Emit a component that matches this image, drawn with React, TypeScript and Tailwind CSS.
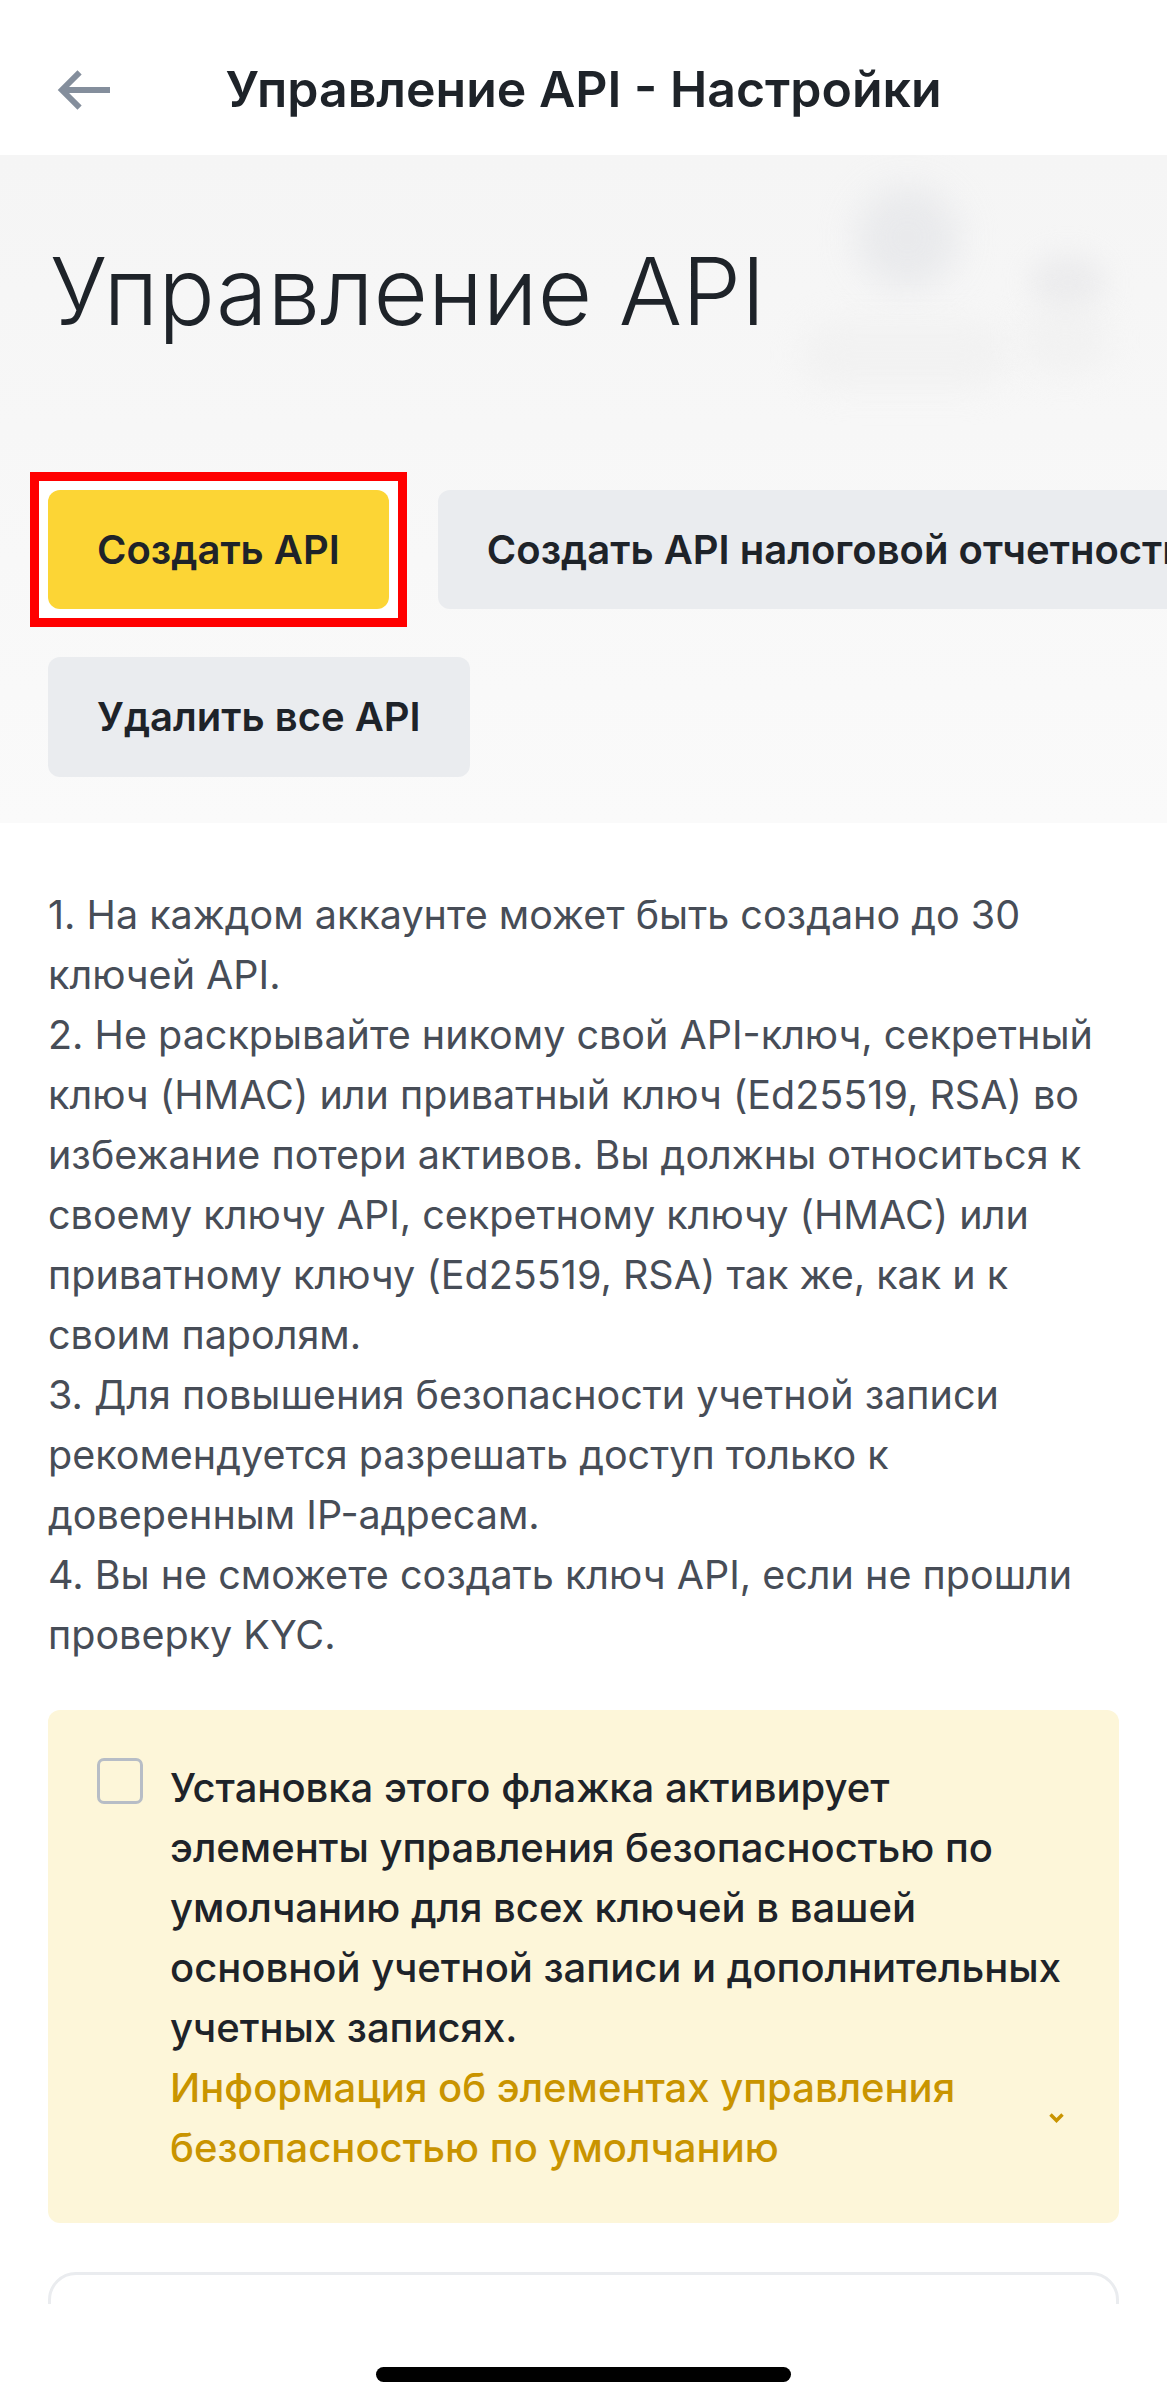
import React from "react";

function BackArrow() {
  return (
    <svg width="54" height="42" viewBox="0 0 54 42" fill="none">
      <path d="M23 3 L5 21 L23 39" stroke="#848E9C" strokeWidth="6" strokeLinejoin="miter" />
      <path d="M5 21 H54" stroke="#848E9C" strokeWidth="6" />
    </svg>
  );
}

function Chevron() {
  return (
    <svg width="15" height="10" viewBox="0 0 15 10" fill="none">
      <path d="M1.5 1.5 L7.5 7.5 L13.5 1.5" stroke="#C99400" strokeWidth="3.5" />
    </svg>
  );
}

export default function App() {
  return (
    <div className="w-[1167px] h-[2406px] bg-white overflow-hidden flex flex-col font-['Inter',sans-serif] text-[#1E2329]">
      <header className="h-[155px] shrink-0 flex items-center pt-[24px]">
        <div className="w-[110px] pl-[57px] flex items-center">
          <BackArrow />
        </div>
        <h1 className="flex-1 text-center text-[50px] font-semibold">Управление API - Настройки</h1>
        <div className="w-[110px]" />
      </header>

      <main className="flex-1 overflow-hidden">
        <section className="relative h-[668px] overflow-hidden bg-gradient-to-b from-[#f5f5f5] to-[#fafafa] px-[48px] pt-[88px]">
          {/* blurred decoration */}
          <div className="absolute left-[855px] top-[30px] w-[105px] h-[105px] rounded-full bg-[#e6e7ea] blur-[18px] opacity-80" />
          <div className="absolute left-[1030px] top-[100px] w-[75px] h-[55px] rounded-full bg-[#e8e8ea] blur-[14px] opacity-70" />
          <div className="absolute left-[800px] top-[165px] w-[210px] h-[70px] rounded-full bg-[#efefef] blur-[16px] opacity-60" />
          <div className="absolute left-[1020px] top-[150px] w-[90px] h-[70px] rounded-full bg-[#efefef] blur-[16px] opacity-60" />

          <h2 className="relative ml-[2px] text-[94px] leading-[96px] font-light">Управление API</h2>

          <div className="relative mt-[151px] flex gap-[49px] whitespace-nowrap">
            <div className="-m-[18px] border-[9px] border-[#ff0000] bg-white p-[9px] shrink-0">
              <button className="h-[119px] px-[49px] rounded-[12px] bg-[#FCD535] text-[40px] font-semibold">
                Создать API
              </button>
            </div>
            <button className="h-[119px] px-[49px] rounded-[12px] bg-[#EAECEF] text-[40px] font-semibold shrink-0">
              Создать API налоговой отчетности
            </button>
          </div>
          <div className="relative mt-[48px] flex">
            <button className="h-[120px] px-[49px] rounded-[12px] bg-[#EAECEF] text-[40px] font-semibold whitespace-nowrap">
              Удалить все API
            </button>
          </div>
        </section>

        <div className="px-[48px] pt-[62px] text-[39.5px] leading-[60px] text-[#474D57] whitespace-nowrap">
          <p>
            1. На каждом аккаунте может быть создано до 30
            <br />
            ключей API.
          </p>
          <p>
            2. Не раскрывайте никому свой API-ключ, секретный
            <br />
            ключ (HMAC) или приватный ключ (Ed25519, RSA) во
            <br />
            избежание потери активов. Вы должны относиться к
            <br />
            своему ключу API, секретному ключу (HMAC) или
            <br />
            приватному ключу (Ed25519, RSA) так же, как и к
            <br />
            своим паролям.
          </p>
          <p>
            3. Для повышения безопасности учетной записи
            <br />
            рекомендуется разрешать доступ только к
            <br />
            доверенным IP-адресам.
          </p>
          <p>
            4. Вы не сможете создать ключ API, если не прошли
            <br />
            проверку KYC.
          </p>
        </div>

        <div className="mx-[48px] mt-[45px] rounded-[12px] bg-[#FDF6D9] pt-[48px] pb-[45px] pl-[49px] pr-[55px] flex gap-[27px]">
          <div className="w-[46px] h-[46px] shrink-0 rounded-[7px] border-[3px] border-[#B7BDC6]" />
          <div className="flex-1 min-w-0 text-[40px] leading-[60px] font-medium whitespace-nowrap">
            <p>
              Установка этого флажка активирует
              <br />
              элементы управления безопасностью по
              <br />
              умолчанию для всех ключей в вашей
              <br />
              основной учетной записи и дополнительных
              <br />
              учетных записях.
            </p>
            <div className="flex items-center justify-between text-[#C99400]">
              <p>
                Информация об элементах управления
                <br />
                безопасностью по умолчанию
              </p>
              <Chevron />
            </div>
          </div>
        </div>

        <div className="mx-[48px] mt-[49px] h-[200px] rounded-[28px] border-[3px] border-[#EAECEF] bg-white" />
      </main>

      <footer className="h-[102px] shrink-0 bg-white flex justify-center pt-[63px]">
        <div className="w-[415px] h-[15px] rounded-full bg-black" />
      </footer>
    </div>
  );
}
